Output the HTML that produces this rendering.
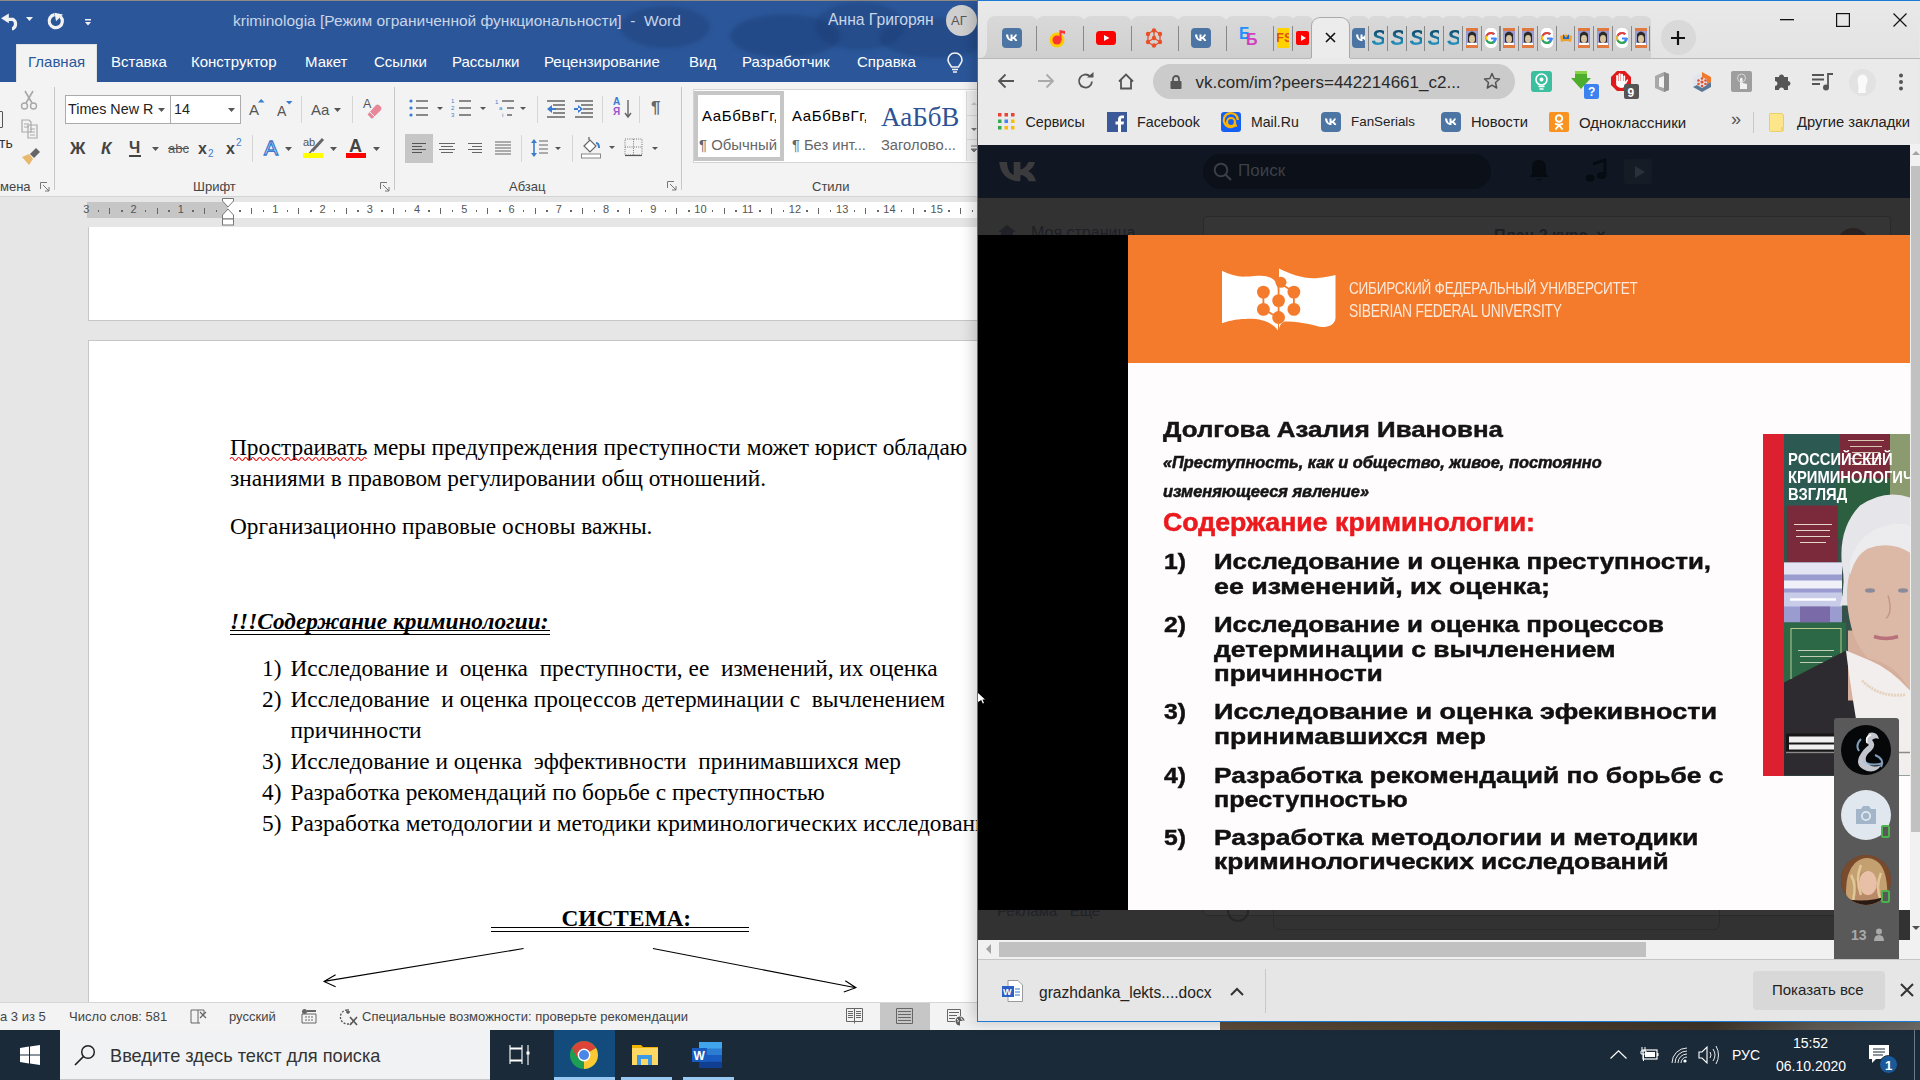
<!DOCTYPE html>
<html><head><meta charset="utf-8">
<style>
*{margin:0;padding:0;box-sizing:border-box}
html,body{width:1920px;height:1080px;overflow:hidden;background:#1b2a38;font-family:"Liberation Sans",sans-serif}
.a{position:absolute}
svg{position:absolute;overflow:visible}
#word{left:0;top:0;width:977px;height:1030px;background:#e6e6e6;overflow:hidden}
#title{left:0;top:0;width:977px;height:44px;background:#2b579a;border-top:1px solid #8e8983}
#tabs{left:0;top:44px;width:977px;height:38px;background:#2b579a}
#tabs2{left:0;top:44px;width:977px;height:38px}
.tab{position:absolute;top:9px;font-size:15px;color:#fff;white-space:nowrap}
#ribbon{left:0;top:82px;width:977px;height:115px;background:#f3f3f3;border-bottom:1px solid #d5d5d5}
.rl{position:absolute;font-size:13px;color:#444;white-space:nowrap}
.sep{position:absolute;width:1px;background:#c8c8c8}
#ruler{left:0;top:197px;width:977px;height:30px;background:#e6e6e6}
#status{left:0;top:1002px;width:977px;height:28px;background:#f3f3f3;border-top:1px solid #d6d6d6}
.st{position:absolute;top:6px;font-size:13px;color:#444;white-space:nowrap}
#taskbar{left:0;top:1030px;width:1920px;height:50px;background:#1b2a38}
#chrome{left:977px;top:0;width:943px;height:1022px;background:#e8e8e8;border:1px solid #1a7ad4;border-right:none;overflow:hidden;box-shadow:-4px 0 13px rgba(0,0,0,0.18)}
.page{background:#fff;border:1px solid #c6c6c6}
.doc{position:absolute;font-family:"Liberation Serif",serif;font-size:23.33px;line-height:31px;color:#000;white-space:nowrap}
.bm{top:113px;color:#222;white-space:nowrap}
.sl{position:absolute;font-family:"Liberation Sans",sans-serif;font-weight:bold;-webkit-text-stroke:0.55px currentColor;line-height:1;white-space:nowrap;transform-origin:0 0}
.rn{position:absolute;top:6px;font-size:11px;color:#555;transform:translateX(-50%)}
</style></head><body>
<div id="word" class="a">
  <div id="title" class="a"></div>
  <div id="tabs" class="a"></div>
  <div class="a" style="left:0;top:0;width:977px;height:82px;overflow:hidden">
    <div class="a" style="left:620px;top:6px;width:90px;height:42px;border-radius:50%;background:rgba(22,50,100,0.3);filter:blur(2px)"></div>
    <div class="a" style="left:730px;top:14px;width:110px;height:44px;border-radius:50%;background:rgba(22,50,100,0.33);filter:blur(2px)"></div>
    <div class="a" style="left:815px;top:2px;width:90px;height:48px;border-radius:50%;background:rgba(22,50,100,0.28);filter:blur(2px)"></div>
    <div class="a" style="left:880px;top:18px;width:110px;height:40px;border-radius:50%;background:rgba(22,50,100,0.3);filter:blur(2px)"></div>
  </div>
  <div class="a" style="left:0;top:0;width:977px;height:44px">
    <!-- undo -->
    <svg width="22" height="18" style="left:1px;top:13px" viewBox="0 0 22 18"><path d="M6 6.4 H12 A5.4 5.4 0 0 1 12 15.6 H11" fill="none" stroke="#f2f2f2" stroke-width="3.2"/><path d="M0 5.3 L7.8 0.5 V10.2 Z" fill="#f2f2f2"/></svg>
    <svg width="8" height="5" style="left:26px;top:17px"><path d="M0 0 L7 0 L3.5 4 Z" fill="#f2f2f2"/></svg>
    <!-- redo -->
    <svg width="22" height="22" style="left:45px;top:12px" viewBox="0 0 22 22"><path d="M9.6 2.6 A6.6 6.6 0 1 0 15.6 4.6" fill="none" stroke="#f2f2f2" stroke-width="3.2"/><path d="M9.6 0.8 L18 2.4 L11 9.2 Z" fill="#f2f2f2"/></svg>
    <svg width="8" height="8" style="left:85px;top:19px"><rect x="0" y="0" width="6" height="1.5" fill="#f2f2f2"/><path d="M0 3 L6 3 L3 6.5 Z" fill="#f2f2f2"/></svg>
    <div class="a" style="left:233px;top:12px;font-size:15.5px;color:#c9d5e8;white-space:nowrap">kriminologia [Режим ограниченной функциональности]&nbsp; -&nbsp; Word</div>
    <div class="a" style="left:828px;top:11px;font-size:15.7px;color:#c9d5e8;white-space:nowrap">Анна Григорян</div>
    <div class="a" style="left:946px;top:5px;width:31px;height:31px;border-radius:50%;background:#cfcfcf;font-size:13px;color:#555;line-height:31px;text-indent:5px;overflow:hidden;white-space:nowrap">АГ</div>
  </div>
  <div id="tabs2" class="a">
    <div class="a" style="left:16px;top:0;width:81px;height:38px;background:#f3f3f3;border:1px solid #e1e1e1;border-bottom:none"></div>
    <div class="tab" style="left:28px;color:#2b579a">Главная</div>
    <div class="tab" style="left:111px">Вставка</div>
    <div class="tab" style="left:191px">Конструктор</div>
    <div class="tab" style="left:305px">Макет</div>
    <div class="tab" style="left:374px">Ссылки</div>
    <div class="tab" style="left:452px">Рассылки</div>
    <div class="tab" style="left:544px">Рецензирование</div>
    <div class="tab" style="left:689px">Вид</div>
    <div class="tab" style="left:742px">Разработчик</div>
    <div class="tab" style="left:857px">Справка</div>
    <svg width="16" height="22" style="left:947px;top:8px" viewBox="0 0 16 22"><path d="M8 1 C3.5 1 1 4.5 1 8 C1 11 3.5 12.5 4.5 15 L11.5 15 C12.5 12.5 15 11 15 8 C15 4.5 12.5 1 8 1 Z" fill="none" stroke="#f2f2f2" stroke-width="1.6"/><path d="M5 17.5 H11 M6 20 H10" stroke="#f2f2f2" stroke-width="1.6"/></svg>
  </div>
  <div id="ribbon" class="a">
    <!-- clipboard -->
    <div class="a" style="left:-4px;top:29px;width:7px;height:17px;border:1.5px solid #555;border-radius:1px"></div>
    <div class="rl" style="left:-1px;top:53px;font-size:14px;color:#333">ть</div>
    <svg width="18" height="20" style="left:20px;top:8px" viewBox="0 0 18 20"><path d="M5 1 L12 13 M13 1 L6 13" stroke="#a8a8a8" stroke-width="1.6"/><circle cx="4.5" cy="16" r="3" fill="none" stroke="#a8a8a8" stroke-width="1.4"/><circle cx="13.5" cy="16" r="3" fill="none" stroke="#a8a8a8" stroke-width="1.4"/></svg>
    <svg width="18" height="20" style="left:21px;top:37px" viewBox="0 0 18 20"><path d="M1 1 H8 L10 3 V13 H1 Z M7 6 H16 V19 H7 Z" fill="#f3f3f3" stroke="#aaa" stroke-width="1.2"/><path d="M3 5H8M3 8H8M9 10H14M9 13H14M9 16H14" stroke="#aaa" stroke-width="1"/></svg>
    <svg width="20" height="18" style="left:21px;top:66px" viewBox="0 0 20 18"><path d="M1 9 L8 6 L12 11 L8 17 Z" fill="#e8b86c"/><path d="M9 6 L15 0 L19 4 L13 10 Z" fill="#666"/></svg>
    <div class="rl" style="left:0px;top:97px">мена</div>
    <svg width="10" height="10" style="left:40px;top:100px" viewBox="0 0 10 10"><path d="M0.5 7 V0.5 H7 M3 3 L9 9 M9 5 V9 H5" fill="none" stroke="#777" stroke-width="1"/></svg>
    <div class="sep" style="left:54px;top:5px;height:103px"></div>
    <!-- font -->
    <div class="a" style="left:65px;top:13px;width:106px;height:29px;background:#fff;border:1px solid #ababab"></div>
    <div class="a" style="left:170px;top:13px;width:71px;height:29px;background:#fff;border:1px solid #ababab"></div>
    <div class="rl" style="left:68px;top:19px;font-size:14.3px;color:#222">Times New R</div>
    <svg width="8" height="5" style="left:158px;top:26px"><path d="M0 0H7L3.5 4Z" fill="#555"/></svg>
    <div class="rl" style="left:174px;top:19px;font-size:14.3px;color:#222">14</div>
    <svg width="8" height="5" style="left:228px;top:26px"><path d="M0 0H7L3.5 4Z" fill="#555"/></svg>
    <div class="rl" style="left:249px;top:19px;font-size:15px;color:#555">A</div>
    <svg width="7" height="4" style="left:258px;top:17px"><path d="M0 3.5H6.5L3.25 0Z" fill="#3b7bd1"/></svg>
    <div class="rl" style="left:277px;top:21px;font-size:14px;color:#555">A</div>
    <svg width="7" height="4" style="left:285.5px;top:19px"><path d="M0 0H6.5L3.25 3.5Z" fill="#3b7bd1"/></svg>
    <div class="sep" style="left:301px;top:14px;height:27px;background:#d6d6d6"></div>
    <div class="rl" style="left:311px;top:19px;font-size:15px;color:#555">Aa</div>
    <svg width="8" height="5" style="left:334px;top:26px"><path d="M0 0H7L3.5 4Z" fill="#555"/></svg>
    <div class="sep" style="left:352px;top:14px;height:27px;background:#d6d6d6"></div>
    <div class="rl" style="left:363px;top:15px;font-size:12.5px;color:#555">A</div>
    <svg width="18" height="16" style="left:365px;top:103px;top:21px" viewBox="0 0 18 16"><path d="M3 11 L11 2 Q12.5 0.8 14 2 L16 4 Q17 5.5 16 7 L8 15 Q7 16 6 15 L3 12 Q2 11.5 3 11Z" fill="#e8869a"/><path d="M5 9 L10 14" stroke="#f3f3f3" stroke-width="1"/></svg>
    <div class="rl" style="left:70px;top:57px;font-size:17px;font-weight:bold;color:#444">Ж</div>
    <div class="rl" style="left:101px;top:57px;font-size:17px;font-weight:bold;font-style:italic;color:#444">К</div>
    <div class="rl" style="left:129px;top:57px;font-size:16px;font-weight:bold;color:#444">Ч</div>
    <div class="a" style="left:129px;top:73px;width:12px;height:1.5px;background:#444"></div>
    <svg width="8" height="5" style="left:152px;top:65px"><path d="M0 0H7L3.5 4Z" fill="#555"/></svg>
    <div class="rl" style="left:168px;top:59px;font-size:13px;color:#555;text-decoration:line-through">abc</div>
    <div class="rl" style="left:198px;top:58px;font-size:16px;font-weight:bold;color:#444">x</div>
    <div class="rl" style="left:208px;top:66px;font-size:10px;color:#3b7bd1">2</div>
    <div class="rl" style="left:226px;top:58px;font-size:16px;font-weight:bold;color:#444">x</div>
    <div class="rl" style="left:236px;top:55px;font-size:10px;color:#3b7bd1">2</div>
    <div class="sep" style="left:252px;top:53px;height:27px;background:#d6d6d6"></div>
    <div class="rl" style="left:264px;top:54px;font-size:21px;color:#f3f3f3;-webkit-text-stroke:1.3px #3b7bd1">A</div>
    <svg width="8" height="5" style="left:285px;top:65px"><path d="M0 0H7L3.5 4Z" fill="#555"/></svg>
    <div class="rl" style="left:303px;top:54px;font-size:11px;color:#555">ab</div>
    <svg width="20" height="18" style="left:306px;top:55px" viewBox="0 0 20 18"><path d="M6 14 L17 2" stroke="#666" stroke-width="3"/><path d="M3 17 L6 13" stroke="#666" stroke-width="1.5"/></svg>
    <div class="a" style="left:303px;top:71px;width:20px;height:5px;background:#ffff00"></div>
    <svg width="8" height="5" style="left:330px;top:65px"><path d="M0 0H7L3.5 4Z" fill="#555"/></svg>
    <div class="rl" style="left:349px;top:54px;font-size:18px;font-weight:bold;color:#444">A</div>
    <div class="a" style="left:346px;top:71px;width:20px;height:5px;background:#ff0000"></div>
    <svg width="8" height="5" style="left:373px;top:65px"><path d="M0 0H7L3.5 4Z" fill="#555"/></svg>
    <div class="rl" style="left:193px;top:97px">Шрифт</div>
    <svg width="10" height="10" style="left:380px;top:100px" viewBox="0 0 10 10"><path d="M0.5 7 V0.5 H7 M3 3 L9 9 M9 5 V9 H5" fill="none" stroke="#777" stroke-width="1"/></svg>
    <div class="sep" style="left:394px;top:5px;height:103px"></div>
    <!-- paragraph -->
    <svg width="140" height="22" style="left:408px;top:15px" viewBox="0 0 140 22">
      <g fill="#3b7bd1"><circle cx="3" cy="4" r="1.6"/><circle cx="3" cy="11" r="1.6"/><circle cx="3" cy="18" r="1.6"/></g>
      <path d="M8 4H20M8 11H20M8 18H20" stroke="#666" stroke-width="1.3"/>
      <path d="M29 10H35L32 13Z" fill="#555"/>
      <g fill="#3b7bd1" font-size="6" font-family="Liberation Sans"><text x="43" y="6">1</text><text x="43" y="13">2</text><text x="43" y="20">3</text></g>
      <path d="M51 4H63M51 11H63M51 18H63" stroke="#666" stroke-width="1.3"/>
      <path d="M72 10H78L75 13Z" fill="#555"/>
      <g fill="#3b7bd1" font-size="6" font-family="Liberation Sans"><text x="87" y="7">1</text><text x="91" y="13">a</text><text x="94" y="20">i</text></g>
      <path d="M94 4H106M99 11H106M99 18H104" stroke="#666" stroke-width="1.3"/>
      <path d="M112 10H118L115 13Z" fill="#555"/>
    </svg>
    <div class="sep" style="left:537px;top:14px;height:27px;background:#d6d6d6"></div>
    <svg width="50" height="20" style="left:546px;top:18px" viewBox="0 0 50 20">
      <path d="M1 1H19M7 5H19M9 9H19M7 13H19M1 17H19" stroke="#666" stroke-width="1.3"/>
      <path d="M1 9 L6 5 V13 Z M4 8H10V10H4Z" fill="#3b7bd1"/>
      <path d="M29 1H47M35 5H47M37 9H47M35 13H47M29 17H47" stroke="#666" stroke-width="1.3"/>
      <path d="M37 9 L32 5 V13 Z M28 8H34V10H28Z" fill="#3b7bd1"/>
    </svg>
    <div class="sep" style="left:602px;top:14px;height:27px;background:#d6d6d6"></div>
    <div class="rl" style="left:613px;top:14px;font-size:10px;font-weight:bold;color:#3b7bd1">A</div>
    <div class="rl" style="left:613px;top:24px;font-size:10px;font-weight:bold;color:#9a55c8">Я</div>
    <svg width="8" height="20" style="left:624px;top:99px;top:17px" viewBox="0 0 8 20"><path d="M4 1V18 M1 14 L4 18 L7 14" fill="none" stroke="#666" stroke-width="1.4"/></svg>
    <div class="sep" style="left:639px;top:14px;height:27px;background:#d6d6d6"></div>
    <div class="rl" style="left:651px;top:16px;font-size:17px;font-weight:bold;color:#666">¶</div>
    <div class="a" style="left:405px;top:52px;width:28px;height:29px;background:#c6c6c6"></div>
    <svg width="110" height="16" style="left:410px;top:60px" viewBox="0 0 110 16">
      <path d="M2 1.5H16M2 4.5H12M2 7.5H16M2 10.5H12" stroke="#555" stroke-width="1.2"/>
      <path d="M29 1.5H45M31 4.5H43M29 7.5H45M31 10.5H43" stroke="#666" stroke-width="1.2"/>
      <path d="M58 1.5H72M62 4.5H72M58 7.5H72M62 10.5H72" stroke="#666" stroke-width="1.2"/>
      <path d="M85 0H101M85 3H101M85 6H101M85 9H101M85 12H101" stroke="#666" stroke-width="1.2"/>
    </svg>
    <div class="sep" style="left:521px;top:53px;height:27px;background:#d6d6d6"></div>
    <svg width="34" height="20" style="left:530px;top:56px" viewBox="0 0 34 20"><path d="M4 2V18" stroke="#3b7bd1" stroke-width="1.6"/><path d="M1 5L4 1L7 5Z M1 15L4 19L7 15Z" fill="#3b7bd1"/><path d="M9 3H18M9 7H18M9 11H18M9 15H18" stroke="#666" stroke-width="1.2"/><path d="M25 9H31L28 12Z" fill="#555"/></svg>
    <div class="sep" style="left:572px;top:53px;height:27px;background:#d6d6d6"></div>
    <svg width="40" height="22" style="left:580px;top:55px" viewBox="0 0 40 22"><path d="M4 9 L10 3 L16 9 L10 15 Z" fill="#fff" stroke="#666" stroke-width="1.2"/><path d="M9 3 V0" stroke="#666" stroke-width="1.3"/><path d="M16 6 Q19 6 19 11" fill="none" stroke="#3b7bd1" stroke-width="2"/><rect x="1.5" y="17" width="19" height="4" fill="#fff" stroke="#888" stroke-width="1"/><path d="M29 9H35L32 12Z" fill="#555"/></svg>
    <svg width="40" height="20" style="left:624px;top:56px" viewBox="0 0 40 20"><path d="M1 1H18V17H1Z M9.5 1V17 M1 9H18" fill="none" stroke="#777" stroke-width="1" stroke-dasharray="1 1.2"/><path d="M1 17.5H18" stroke="#555" stroke-width="1.2"/><path d="M28 9H34L31 12Z" fill="#555"/></svg>
    <div class="rl" style="left:509px;top:97px">Абзац</div>
    <svg width="10" height="10" style="left:667px;top:99px" viewBox="0 0 10 10"><path d="M0.5 7 V0.5 H7 M3 3 L9 9 M9 5 V9 H5" fill="none" stroke="#777" stroke-width="1"/></svg>
    <div class="sep" style="left:681px;top:5px;height:103px"></div>
    <!-- styles -->
    <div class="a" style="left:693px;top:7px;width:290px;height:74px;background:#fff;border:1px solid #d4d4d4"></div>
    <div class="a" style="left:694px;top:9px;width:90px;height:70px;border:4.5px solid #c6c6c6"></div>
    <div class="rl" style="left:702px;top:25px;font-size:15px;color:#000;width:74px;overflow:hidden;letter-spacing:0.6px">АаБбВвГг,</div>
    <div class="rl" style="left:699px;top:55px;font-size:14.9px;color:#666">¶ Обычный</div>
    <div class="rl" style="left:792px;top:25px;font-size:15px;color:#000;width:74px;overflow:hidden;letter-spacing:0.6px">АаБбВвГг,</div>
    <div class="rl" style="left:792px;top:55px;font-size:14.7px;color:#666">¶ Без инт...</div>
    <div class="rl" style="left:881px;top:20px;font-family:'Liberation Serif',serif;font-size:27px;color:#2e5395">АаБбВ</div>
    <div class="rl" style="left:881px;top:55px;font-size:14.7px;color:#666">Заголово...</div>
    <div class="a" style="left:966px;top:9px;width:11px;height:70px;background:#f0f0f0;border-left:1px solid #dcdcdc"></div>
    <div class="a" style="left:967px;top:33px;width:10px;height:1px;background:#d8d8d8"></div><div class="a" style="left:967px;top:57px;width:10px;height:1px;background:#d8d8d8"></div>
    <svg width="10" height="70" style="left:968px;top:9px"><path d="M3 14L6 11L9 14Z" fill="#c8c8c8"/><path d="M3 37L6 40L9 37Z" fill="#777"/><path d="M3 55H9M3 58L6 61L9 58Z" stroke="#777" fill="#777" stroke-width="1"/></svg>
    <div class="rl" style="left:812px;top:97px">Стили</div>
  </div>
  <div id="ruler" class="a">
    <div class="a" style="left:87px;top:5px;width:900px;height:16px;background:#fff"></div>
    <div class="a" style="left:87px;top:5px;width:141px;height:16px;background:#c6c6c6"></div>
<div class="rn" style="left:86.3px">3</div>
<div class="a" style="left:97.6px;top:13px;width:1.5px;height:1.5px;background:#666"></div>
<div class="a" style="left:109.4px;top:11px;width:1px;height:6px;background:#666"></div>
<div class="a" style="left:121.2px;top:13px;width:1.5px;height:1.5px;background:#666"></div>
<div class="rn" style="left:133.5px">2</div>
<div class="a" style="left:144.8px;top:13px;width:1.5px;height:1.5px;background:#666"></div>
<div class="a" style="left:156.6px;top:11px;width:1px;height:6px;background:#666"></div>
<div class="a" style="left:168.4px;top:13px;width:1.5px;height:1.5px;background:#666"></div>
<div class="rn" style="left:180.8px">1</div>
<div class="a" style="left:192.1px;top:13px;width:1.5px;height:1.5px;background:#666"></div>
<div class="a" style="left:203.9px;top:11px;width:1px;height:6px;background:#666"></div>
<div class="a" style="left:215.7px;top:13px;width:1.5px;height:1.5px;background:#666"></div>
<div class="a" style="left:239.3px;top:13px;width:1.5px;height:1.5px;background:#666"></div>
<div class="a" style="left:251.1px;top:11px;width:1px;height:6px;background:#666"></div>
<div class="a" style="left:262.9px;top:13px;width:1.5px;height:1.5px;background:#666"></div>
<div class="rn" style="left:275.2px">1</div>
<div class="a" style="left:286.6px;top:13px;width:1.5px;height:1.5px;background:#666"></div>
<div class="a" style="left:298.4px;top:11px;width:1px;height:6px;background:#666"></div>
<div class="a" style="left:310.2px;top:13px;width:1.5px;height:1.5px;background:#666"></div>
<div class="rn" style="left:322.5px">2</div>
<div class="a" style="left:333.8px;top:13px;width:1.5px;height:1.5px;background:#666"></div>
<div class="a" style="left:345.6px;top:11px;width:1px;height:6px;background:#666"></div>
<div class="a" style="left:357.4px;top:13px;width:1.5px;height:1.5px;background:#666"></div>
<div class="rn" style="left:369.7px">3</div>
<div class="a" style="left:381.0px;top:13px;width:1.5px;height:1.5px;background:#666"></div>
<div class="a" style="left:392.9px;top:11px;width:1px;height:6px;background:#666"></div>
<div class="a" style="left:404.7px;top:13px;width:1.5px;height:1.5px;background:#666"></div>
<div class="rn" style="left:417.0px">4</div>
<div class="a" style="left:428.3px;top:13px;width:1.5px;height:1.5px;background:#666"></div>
<div class="a" style="left:440.1px;top:11px;width:1px;height:6px;background:#666"></div>
<div class="a" style="left:451.9px;top:13px;width:1.5px;height:1.5px;background:#666"></div>
<div class="rn" style="left:464.2px">5</div>
<div class="a" style="left:475.5px;top:13px;width:1.5px;height:1.5px;background:#666"></div>
<div class="a" style="left:487.3px;top:11px;width:1px;height:6px;background:#666"></div>
<div class="a" style="left:499.2px;top:13px;width:1.5px;height:1.5px;background:#666"></div>
<div class="rn" style="left:511.5px">6</div>
<div class="a" style="left:522.8px;top:13px;width:1.5px;height:1.5px;background:#666"></div>
<div class="a" style="left:534.6px;top:11px;width:1px;height:6px;background:#666"></div>
<div class="a" style="left:546.4px;top:13px;width:1.5px;height:1.5px;background:#666"></div>
<div class="rn" style="left:558.7px">7</div>
<div class="a" style="left:570.0px;top:13px;width:1.5px;height:1.5px;background:#666"></div>
<div class="a" style="left:581.8px;top:11px;width:1px;height:6px;background:#666"></div>
<div class="a" style="left:593.6px;top:13px;width:1.5px;height:1.5px;background:#666"></div>
<div class="rn" style="left:606.0px">8</div>
<div class="a" style="left:617.3px;top:13px;width:1.5px;height:1.5px;background:#666"></div>
<div class="a" style="left:629.1px;top:11px;width:1px;height:6px;background:#666"></div>
<div class="a" style="left:640.9px;top:13px;width:1.5px;height:1.5px;background:#666"></div>
<div class="rn" style="left:653.2px">9</div>
<div class="a" style="left:664.5px;top:13px;width:1.5px;height:1.5px;background:#666"></div>
<div class="a" style="left:676.3px;top:11px;width:1px;height:6px;background:#666"></div>
<div class="a" style="left:688.1px;top:13px;width:1.5px;height:1.5px;background:#666"></div>
<div class="rn" style="left:700.4px">10</div>
<div class="a" style="left:711.8px;top:13px;width:1.5px;height:1.5px;background:#666"></div>
<div class="a" style="left:723.6px;top:11px;width:1px;height:6px;background:#666"></div>
<div class="a" style="left:735.4px;top:13px;width:1.5px;height:1.5px;background:#666"></div>
<div class="rn" style="left:747.7px">11</div>
<div class="a" style="left:759.0px;top:13px;width:1.5px;height:1.5px;background:#666"></div>
<div class="a" style="left:770.8px;top:11px;width:1px;height:6px;background:#666"></div>
<div class="a" style="left:782.6px;top:13px;width:1.5px;height:1.5px;background:#666"></div>
<div class="rn" style="left:794.9px">12</div>
<div class="a" style="left:806.2px;top:13px;width:1.5px;height:1.5px;background:#666"></div>
<div class="a" style="left:818.0px;top:11px;width:1px;height:6px;background:#666"></div>
<div class="a" style="left:829.9px;top:13px;width:1.5px;height:1.5px;background:#666"></div>
<div class="rn" style="left:842.2px">13</div>
<div class="a" style="left:853.5px;top:13px;width:1.5px;height:1.5px;background:#666"></div>
<div class="a" style="left:865.3px;top:11px;width:1px;height:6px;background:#666"></div>
<div class="a" style="left:877.1px;top:13px;width:1.5px;height:1.5px;background:#666"></div>
<div class="rn" style="left:889.4px">14</div>
<div class="a" style="left:900.7px;top:13px;width:1.5px;height:1.5px;background:#666"></div>
<div class="a" style="left:912.5px;top:11px;width:1px;height:6px;background:#666"></div>
<div class="a" style="left:924.3px;top:13px;width:1.5px;height:1.5px;background:#666"></div>
<div class="rn" style="left:936.7px">15</div>
<div class="a" style="left:948.0px;top:13px;width:1.5px;height:1.5px;background:#666"></div>
<div class="a" style="left:959.8px;top:11px;width:1px;height:6px;background:#666"></div>
<div class="a" style="left:971.6px;top:13px;width:1.5px;height:1.5px;background:#666"></div>
<div class="rn" style="left:983.9px">16</div>
<svg width="12" height="30" style="left:222px;top:0px" viewBox="0 0 12 30"><path d="M0.5 1.5 H11.5 V4 L6 10 L0.5 4 Z" fill="#fff" stroke="#777" stroke-width="1"/><path d="M6 12 L11.5 18 V22 H0.5 V18 Z" fill="#fff" stroke="#777" stroke-width="1"/><rect x="0.5" y="22" width="11" height="6" fill="#fff" stroke="#777" stroke-width="1"/></svg>
  </div>
  <div class="a page" style="left:88px;top:227px;width:1000px;height:94px;border-top:none"></div>
  <div class="a page" style="left:88px;top:340px;width:1000px;height:700px"></div>
  <div class="doc" style="left:230px;top:432px">Простраивать меры предупреждения преступности может юрист обладаю</div>
  <svg width="140" height="6" style="left:230px;top:456px" viewBox="0 0 140 6"><path d="M0 3 Q1.75 0 3.5 3 T7 3 T10.5 3 T14 3 T17.5 3 T21 3 T24.5 3 T28 3 T31.5 3 T35 3 T38.5 3 T42 3 T45.5 3 T49 3 T52.5 3 T56 3 T59.5 3 T63 3 T66.5 3 T70 3 T73.5 3 T77 3 T80.5 3 T84 3 T87.5 3 T91 3 T94.5 3 T98 3 T101.5 3 T105 3 T108.5 3 T112 3 T115.5 3 T119 3 T122.5 3 T126 3 T129.5 3 T133 3 T136.5 3" fill="none" stroke="#e81010" stroke-width="1.2"/></svg>
  <div class="doc" style="left:230px;top:463px">знаниями в правовом регулировании общ отношений.</div>
  <div class="doc" style="left:230px;top:510.5px">Организационно правовые основы важны.</div>
  <div class="doc" style="left:230px;top:606px;font-weight:bold;font-style:italic">!!!Содержание криминологии:</div>
  <div class="a" style="left:230px;top:630px;width:320px;height:5px;border-top:1.3px solid #000;border-bottom:1.3px solid #000"></div>
  <div class="doc" style="left:262px;top:653px">1)</div><div class="doc" style="left:290.5px;top:653px">Исследование и&nbsp; оценка&nbsp; преступности, ее&nbsp; изменений, их оценка</div>
  <div class="doc" style="left:262px;top:684px">2)</div><div class="doc" style="left:290.5px;top:684px">Исследование&nbsp; и оценка процессов детерминации с&nbsp; вычленением</div>
  <div class="doc" style="left:290.5px;top:715px">причинности</div>
  <div class="doc" style="left:262px;top:746px">3)</div><div class="doc" style="left:290.5px;top:746px">Исследование и оценка&nbsp; эффективности&nbsp; принимавшихся мер</div>
  <div class="doc" style="left:262px;top:777px">4)</div><div class="doc" style="left:290.5px;top:777px">Разработка рекомендаций по борьбе с преступностью</div>
  <div class="doc" style="left:262px;top:808px">5)</div><div class="doc" style="left:290.5px;top:808px">Разработка методологии и методики криминологических исследований</div>
  <div class="doc" style="left:561.5px;top:902.5px;font-weight:bold">СИСТЕМА:</div>
  <div class="a" style="left:490.5px;top:926.5px;width:258.5px;height:5px;border-top:1.3px solid #000;border-bottom:1.3px solid #000"></div>
  <svg width="977" height="1002" style="left:0;top:0" viewBox="0 0 977 1002"><g fill="none" stroke="#000" stroke-width="1.1"><path d="M523.6 948.5 L324 981.4 M335.6 974.7 L324 981.4 L335.6 986.8"/><path d="M652.9 948.5 L855.9 987.7 M845.3 980.8 L855.9 987.7 L843.8 992"/></g></svg>
  <div id="status" class="a">
    <div class="st" style="left:0px">а 3 из 5</div>
    <div class="st" style="left:69px">Число слов: 581</div>
    <svg width="18" height="16" style="left:190px;top:6px" viewBox="0 0 18 16"><path d="M1 1H8V14H1Z M8 1H14V5 M8 14H10" fill="none" stroke="#666" stroke-width="1"/><path d="M10 3L16 9M16 3L10 9" stroke="#666" stroke-width="1.3"/></svg>
    <div class="st" style="left:229px">русский</div>
    <svg width="16" height="16" style="left:301px;top:5px" viewBox="0 0 16 16"><circle cx="3.5" cy="3.5" r="2.5" fill="#666"/><path d="M1 6H15V15H1Z" fill="none" stroke="#666" stroke-width="1"/><path d="M4 9H6M7 9H9M10 9H12M4 12H6M7 12H9M10 12H12" stroke="#666" stroke-width="1"/><path d="M6 3H15" stroke="#666" stroke-width="2"/></svg>
    <svg width="20" height="18" style="left:339px;top:5px" viewBox="0 0 20 18"><path d="M8 2 A7 7 0 1 0 12 15" fill="none" stroke="#555" stroke-width="1.3" stroke-dasharray="2 1.5"/><path d="M9 1V6M7 4H11" stroke="#555" stroke-width="1.3"/><path d="M11 9L18 17M18 9L11 17" stroke="#555" stroke-width="1.6"/></svg>
    <div class="st" style="left:362px">Специальные возможности: проверьте рекомендации</div>
    <svg width="20" height="18" style="left:845px;top:4px" viewBox="0 0 20 18"><path d="M1.5 1.5H17.5V14.5H1.5Z M9.5 1.5V16.5" fill="none" stroke="#666" stroke-width="1"/><path d="M3 4.5H8M3 6.5H8M3 8.5H8M3 10.5H8M11 4.5H16M11 6.5H16M11 8.5H16M11 10.5H16" stroke="#666" stroke-width="1"/></svg>
    <div class="a" style="left:880px;top:0px;width:50px;height:27px;background:#c6c6c6"></div>
    <svg width="18" height="18" style="left:895px;top:4px" viewBox="0 0 18 18"><path d="M1.5 1.5H17.5V16.5H1.5Z" fill="none" stroke="#666" stroke-width="1"/><path d="M3 4.5H16M3 7.5H16M3 10.5H16M3 13.5H16" stroke="#666" stroke-width="1"/></svg>
    <svg width="20" height="18" style="left:946px;top:5px" viewBox="0 0 20 18"><path d="M1.5 1.5H14.5V8 M1.5 1.5V13.5H9" fill="none" stroke="#666" stroke-width="1"/><path d="M3 4.5H13M3 7.5H11M3 10.5H9" stroke="#666" stroke-width="1"/><circle cx="14" cy="13" r="4.5" fill="#5e5e5e"/><path d="M11 11 Q13 12 12 14 M15 9.5 Q15 12 17.5 12.5 M14 16 Q15 14.5 17 15" stroke="#f3f3f3" stroke-width="1" fill="none"/></svg>
  </div>
</div>
<div id="taskbar" class="a">
  <svg width="21" height="21" style="left:20px;top:15px" viewBox="0 0 21 21"><path d="M0 3 L9 1.6 V9.5 H0 Z M10 1.4 L20 0 V9.5 H10 Z M0 10.5 H9 V18.4 L0 17 Z M10 10.5 H20 V20 L10 18.6 Z" fill="#fff"/></svg>
  <div class="a" style="left:60px;top:0;width:430px;height:50px;background:#f1f2f4;border-bottom:1px solid #c8c8c8"></div>
  <svg width="22" height="22" style="left:74px;top:14px" viewBox="0 0 22 22"><circle cx="14" cy="8" r="6.3" fill="none" stroke="#222" stroke-width="1.5"/><path d="M9.5 12.5 L1 21" stroke="#222" stroke-width="1.7"/></svg>
  <div class="a" style="left:110px;top:15.5px;font-size:18.2px;color:#333;white-space:nowrap">Введите здесь текст для поиска</div>
  <svg width="22" height="20" style="left:509px;top:15px" viewBox="0 0 22 20"><path d="M1 0V3H13V0 M1 19V16H13V19 M1 4H13V15H1Z" fill="none" stroke="#fff" stroke-width="1.1"/><path d="M19 0V20" stroke="#fff" stroke-width="1.1"/><rect x="17.5" y="6.5" width="3" height="3" fill="#fff"/></svg>
  <div class="a" style="left:554px;top:0;width:61px;height:47px;background:#124b7c"></div>
  <div class="a" style="left:554px;top:47px;width:61px;height:3px;background:#99c9f0"></div>
  <div class="a" style="left:621px;top:47px;width:51px;height:3px;background:#99c9f0"></div>
  <div class="a" style="left:683px;top:47px;width:51px;height:3px;background:#99c9f0"></div>
  <svg width="30" height="30" style="left:569px;top:10px" viewBox="0 0 30 30"><circle cx="15" cy="15" r="14" fill="#1e9e52"/><path d="M15 15 L27.1 8 A14 14 0 0 0 2.9 8 Z" fill="#db4437"/><path d="M15 15 L27.1 8 A14 14 0 0 1 15 29 Z" fill="#fcc934"/><path d="M15 15 L2.9 8 L8 17 Z" fill="#db4437"/><circle cx="15" cy="15" r="6.4" fill="#fff"/><circle cx="15" cy="15" r="5" fill="#4a86e8"/></svg>
  <svg width="28" height="24" style="left:632px;top:13px" viewBox="0 0 28 24"><path d="M0 2 H9 L11 4 H26 V22 H0 Z" fill="#f0b400"/><path d="M0 5 H26 V22 H0 Z" fill="#ffd864"/><path d="M5 22 V12 H20 V22 H16 V16 H9 V22 Z" fill="#3d9ae8"/></svg>
  <svg width="32" height="26" style="left:692px;top:12px" viewBox="0 0 32 26"><rect x="7" y="0" width="23" height="26" fill="#2b7cd3"/><rect x="7" y="0" width="23" height="6.5" fill="#41a5ee"/><rect x="7" y="13" width="23" height="6.5" fill="#185abd"/><rect x="7" y="19.5" width="23" height="6.5" fill="#103f91"/><rect x="0" y="6" width="15" height="14" fill="#185abd"/><text x="1.5" y="17.5" font-family="Liberation Sans" font-weight="bold" font-size="12" fill="#fff">W</text></svg>
  <svg width="17" height="9" style="left:1610px;top:20px" viewBox="0 0 17 9"><path d="M0.5 8.5 L8.5 0.8 L16.5 8.5" fill="none" stroke="#fff" stroke-width="1.2"/></svg>
  <svg width="21" height="15" style="left:1638px;top:17px" viewBox="0 0 21 15"><path d="M4 0V4M7 0V4M3 4H8V7H3Z M5.5 7V14" stroke="#fff" fill="none" stroke-width="1"/><rect x="5" y="3" width="14" height="9" fill="none" stroke="#fff" stroke-width="1.2"/><rect x="7" y="5" width="10" height="5" fill="#fff"/><rect x="19" y="6" width="1.5" height="3" fill="#fff"/></svg>
  <svg width="18" height="17" style="left:1671px;top:17px" viewBox="0 0 18 17"><path d="M1 16 A15 15 0 0 1 16 1 M4 16 A12 12 0 0 1 16 4 M7 16 A9 9 0 0 1 16 7 M10 16 A6 6 0 0 1 16 10" fill="none" stroke="#fff" stroke-width="0.9"/><circle cx="14" cy="14" r="1.6" fill="#fff"/></svg>
  <svg width="22" height="20" style="left:1698px;top:15px" viewBox="0 0 22 20"><path d="M1 7H4L9 2V18L4 13H1Z" fill="none" stroke="#fff" stroke-width="1.1"/><path d="M12 7 Q14 10 12 13 M15 4 Q19 10 15 16 M18 1 Q23 10 18 19" fill="none" stroke="#fff" stroke-width="0.9"/></svg>
  <div class="a" style="left:1732px;top:17px;font-size:14px;color:#fff">РУС</div>
  <div class="a" style="left:1793px;top:5px;font-size:14px;color:#fff">15:52</div>
  <div class="a" style="left:1776px;top:28px;font-size:14px;color:#fff">06.10.2020</div>
  <svg width="30" height="30" style="left:1868px;top:14px" viewBox="0 0 30 30"><path d="M1 1H21V15H8L4 19V15H1Z" fill="#fff"/><path d="M5 5H17M5 8H17M5 11H15" stroke="#1b2a38" stroke-width="1.2"/><circle cx="20.5" cy="20.5" r="9" fill="#1a5a9a" stroke="#1b2a38" stroke-width="1"/><text x="17" y="25.5" font-family="Liberation Sans" font-weight="bold" font-size="13" fill="#fff">1</text></svg>
  <div class="a" style="left:1914px;top:0;width:1px;height:50px;background:#6a7a88"></div>
</div>
<div class="a" style="left:960px;top:1021px;width:260px;height:9px;background:#f0f0f0"></div>
<div class="a" style="left:1220px;top:1021px;width:700px;height:9px;background:linear-gradient(90deg,#5a4a38 0%,#4a3c2c 40%,#3e3428 70%,#5e5a54 85%,#6a6966 100%)"></div>
<div id="chrome" class="a">
  <!-- tab strip -->
  <div class="a" style="left:0;top:0;width:941px;height:57px;background:linear-gradient(#e9e9e9,#e3e3e3)"></div>
  <svg width="9" height="10" style="left:1px;top:46.5px" viewBox="0 0 9 10"><path d="M0 10 Q8 10 8 0 V10 Z" fill="#cfcfcf"/></svg>
  <div class="a" style="left:9.0px;top:14.8px;width:50.7px;height:42px;background:linear-gradient(#d9d9d9,#cfcfcf);border-radius:8px 8px 0 0"></div>
  <div class="a" style="left:57.7px;top:14.8px;width:49.0px;height:42px;background:linear-gradient(#d9d9d9,#cfcfcf);border-radius:8px 8px 0 0"></div>
  <div class="a" style="left:104.7px;top:14.8px;width:49.8px;height:42px;background:linear-gradient(#d9d9d9,#cfcfcf);border-radius:8px 8px 0 0"></div>
  <div class="a" style="left:152.5px;top:14.8px;width:48.9px;height:42px;background:linear-gradient(#d9d9d9,#cfcfcf);border-radius:8px 8px 0 0"></div>
  <div class="a" style="left:199.4px;top:14.8px;width:49.6px;height:42px;background:linear-gradient(#d9d9d9,#cfcfcf);border-radius:8px 8px 0 0"></div>
  <div class="a" style="left:247.0px;top:14.8px;width:49.5px;height:42px;background:linear-gradient(#d9d9d9,#cfcfcf);border-radius:8px 8px 0 0"></div>
  <div class="a" style="left:294.5px;top:14.8px;width:21.0px;height:42px;background:linear-gradient(#d9d9d9,#cfcfcf);border-radius:6px 6px 0 0"></div>
  <div class="a" style="left:313.5px;top:14.8px;width:21.0px;height:42px;background:linear-gradient(#d9d9d9,#cfcfcf);border-radius:6px 6px 0 0"></div>
  <div class="a" style="left:370.4px;top:14.8px;width:21.1px;height:42px;background:linear-gradient(#d9d9d9,#cfcfcf);border-radius:6px 6px 0 0"></div>
  <div class="a" style="left:389.5px;top:14.8px;width:21.0px;height:42px;background:linear-gradient(#d9d9d9,#cfcfcf);border-radius:6px 6px 0 0"></div>
  <div class="a" style="left:408.5px;top:14.8px;width:21.0px;height:42px;background:linear-gradient(#d9d9d9,#cfcfcf);border-radius:6px 6px 0 0"></div>
  <div class="a" style="left:427.5px;top:14.8px;width:19.9px;height:42px;background:linear-gradient(#d9d9d9,#cfcfcf);border-radius:6px 6px 0 0"></div>
  <div class="a" style="left:445.4px;top:14.8px;width:20.8px;height:42px;background:linear-gradient(#d9d9d9,#cfcfcf);border-radius:6px 6px 0 0"></div>
  <div class="a" style="left:464.2px;top:14.8px;width:21.4px;height:42px;background:linear-gradient(#d9d9d9,#cfcfcf);border-radius:6px 6px 0 0"></div>
  <div class="a" style="left:483.6px;top:14.8px;width:21.0px;height:42px;background:linear-gradient(#d9d9d9,#cfcfcf);border-radius:6px 6px 0 0"></div>
  <div class="a" style="left:502.6px;top:14.8px;width:20.2px;height:42px;background:linear-gradient(#d9d9d9,#cfcfcf);border-radius:6px 6px 0 0"></div>
  <div class="a" style="left:520.8px;top:14.8px;width:21.0px;height:42px;background:linear-gradient(#d9d9d9,#cfcfcf);border-radius:6px 6px 0 0"></div>
  <div class="a" style="left:539.8px;top:14.8px;width:20.7px;height:42px;background:linear-gradient(#d9d9d9,#cfcfcf);border-radius:6px 6px 0 0"></div>
  <div class="a" style="left:558.4px;top:14.8px;width:21.3px;height:42px;background:linear-gradient(#d9d9d9,#cfcfcf);border-radius:6px 6px 0 0"></div>
  <div class="a" style="left:577.7px;top:14.8px;width:19.8px;height:42px;background:linear-gradient(#d9d9d9,#cfcfcf);border-radius:6px 6px 0 0"></div>
  <div class="a" style="left:595.5px;top:14.8px;width:21.1px;height:42px;background:linear-gradient(#d9d9d9,#cfcfcf);border-radius:6px 6px 0 0"></div>
  <div class="a" style="left:614.6px;top:14.8px;width:20.9px;height:42px;background:linear-gradient(#d9d9d9,#cfcfcf);border-radius:6px 6px 0 0"></div>
  <div class="a" style="left:633.5px;top:14.8px;width:20.8px;height:42px;background:linear-gradient(#d9d9d9,#cfcfcf);border-radius:6px 6px 0 0"></div>
  <div class="a" style="left:652.3px;top:14.8px;width:20.7px;height:42px;background:linear-gradient(#d9d9d9,#cfcfcf);border-radius:6px 6px 0 0"></div>

<div class="a" style="left:333px;top:16px;width:39px;height:43px;background:#ececec;border:1px solid #a9a9a9;border-bottom:none;border-radius:9px 9px 0 0"></div>
<div class="a" style="left:58.2px;top:25px;width:1.3px;height:25px;background:#888"></div>
<div class="a" style="left:105.2px;top:25px;width:1.3px;height:25px;background:#888"></div>
<div class="a" style="left:153px;top:25px;width:1.3px;height:25px;background:#888"></div>
<div class="a" style="left:199.9px;top:25px;width:1.3px;height:25px;background:#888"></div>
<div class="a" style="left:247.5px;top:25px;width:1.3px;height:25px;background:#888"></div>
<div class="a" style="left:295px;top:25px;width:1.3px;height:25px;background:#888"></div>
<div class="a" style="left:314px;top:25px;width:1.3px;height:25px;background:#888"></div>
<div class="a" style="left:390px;top:25px;width:1.3px;height:25px;background:#888"></div>
<div class="a" style="left:409px;top:25px;width:1.3px;height:25px;background:#888"></div>
<div class="a" style="left:428px;top:25px;width:1.3px;height:25px;background:#888"></div>
<div class="a" style="left:445.9px;top:25px;width:1.3px;height:25px;background:#888"></div>
<div class="a" style="left:464.7px;top:25px;width:1.3px;height:25px;background:#888"></div>
<div class="a" style="left:484.1px;top:25px;width:1.3px;height:25px;background:#888"></div>
<div class="a" style="left:503.1px;top:25px;width:1.3px;height:25px;background:#888"></div>
<div class="a" style="left:521.3px;top:25px;width:1.3px;height:25px;background:#888"></div>
<div class="a" style="left:540.2px;top:25px;width:1.3px;height:25px;background:#888"></div>
<div class="a" style="left:558.9px;top:25px;width:1.3px;height:25px;background:#888"></div>
<div class="a" style="left:578.2px;top:25px;width:1.3px;height:25px;background:#888"></div>
<div class="a" style="left:596px;top:25px;width:1.3px;height:25px;background:#888"></div>
<div class="a" style="left:615.1px;top:25px;width:1.3px;height:25px;background:#888"></div>
<div class="a" style="left:634px;top:25px;width:1.3px;height:25px;background:#888"></div>
<div class="a" style="left:652.8px;top:25px;width:1.3px;height:25px;background:#888"></div>
<div class="a" style="left:671.2px;top:25px;width:1.3px;height:25px;background:#888"></div>
  <svg width="20" height="20" style="left:24px;top:27px" viewBox="0 0 20 20"><rect width="20" height="20" rx="4" fill="#4c75a3"/><path d="M4 6.5H6.2C6.3 9.5 7.6 10.8 8.5 11V6.5H10.5V9C11.6 8.9 12.6 7.7 13 6.5H15C14.7 8 13.6 9.2 12.8 9.7C13.6 10.1 14.8 11.1 15.3 13H13.1C12.7 11.8 11.7 10.9 10.5 10.8V13H10.2C6.6 13 4.2 10.5 4 6.5Z" fill="#fff"/></svg>
<svg width="20" height="20" style="left:71px;top:27px" viewBox="0 0 20 20"><circle cx="8" cy="12" r="7.5" fill="#ffcc00"/><circle cx="8" cy="12" r="4.5" fill="#f33"/><path d="M10.5 12V2L16 3V6L12.5 5V12" fill="#f33"/></svg>
<svg width="20" height="16" style="left:118px;top:29px" viewBox="0 0 20 14"><rect width="20" height="14" rx="3.5" fill="#ff0000"/><path d="M8 4L13.5 7L8 10Z" fill="#fff"/></svg>
<svg width="20" height="20" style="left:166px;top:27px" viewBox="0 0 20 20"><g stroke="#e8502a" stroke-width="1.3" fill="none"><path d="M10 2L16 6V14L10 18L4 14V6Z M10 2V10L16 14 M10 10L4 14"/></g><g fill="#e8502a"><circle cx="10" cy="2.5" r="2.2"/><circle cx="16" cy="6" r="2.2"/><circle cx="16" cy="14" r="2.2"/><circle cx="10" cy="17.5" r="2.2"/><circle cx="4" cy="14" r="2.2"/><circle cx="4" cy="6" r="2.2"/><circle cx="10" cy="10" r="2.2"/></g></svg>
<svg width="20" height="20" style="left:213px;top:27px" viewBox="0 0 20 20"><rect width="20" height="20" rx="4" fill="#4c75a3"/><path d="M4 6.5H6.2C6.3 9.5 7.6 10.8 8.5 11V6.5H10.5V9C11.6 8.9 12.6 7.7 13 6.5H15C14.7 8 13.6 9.2 12.8 9.7C13.6 10.1 14.8 11.1 15.3 13H13.1C12.7 11.8 11.7 10.9 10.5 10.8V13H10.2C6.6 13 4.2 10.5 4 6.5Z" fill="#fff"/></svg>
<div class="a" style="left:261px;top:24px;font-size:16px;font-weight:bold;color:#1e90ff">Б</div><div class="a" style="left:268px;top:30px;font-size:16px;font-weight:bold;color:#d040c0">Б</div>
<div class="a" style="left:299px;top:27px;width:12px;height:20px;background:#ffd200;overflow:hidden"><div style="font-size:13px;color:#e05010;font-weight:bold;line-height:20px;margin-left:-1px">FS</div></div>
<svg width="13" height="14" style="left:318px;top:30px" viewBox="0 0 13 14"><rect width="13" height="14" rx="2" fill="#ff0000"/><path d="M5 4L10 7L5 10Z" fill="#fff"/></svg>
<svg width="11" height="11" style="left:347px;top:31px" viewBox="0 0 11 11"><path d="M1 1L10 10M10 1L1 10" stroke="#111" stroke-width="1.6"/></svg>
<div class="a" style="left:374px;top:27px;width:13px;height:20px;overflow:hidden"><svg width="20" height="20" style="left:0;top:0" viewBox="0 0 20 20"><rect width="20" height="20" rx="4" fill="#4c75a3"/><path d="M4 6.5H6.2C6.3 9.5 7.6 10.8 8.5 11V6.5H10.5V9C11.6 8.9 12.6 7.7 13 6.5H15C14.7 8 13.6 9.2 12.8 9.7C13.6 10.1 14.8 11.1 15.3 13H13.1C12.7 11.8 11.7 10.9 10.5 10.8V13H10.2C6.6 13 4.2 10.5 4 6.5Z" fill="#fff"/></svg></div>
<div class="a" style="left:393.5px;top:26px;font-size:22px;font-weight:bold;font-style:italic;color:#1a7fa8;width:12px;overflow:hidden;line-height:22px;background:linear-gradient(#0a3c5a,#2aa8d8);-webkit-background-clip:text;-webkit-text-fill-color:transparent">S</div>
<div class="a" style="left:412.5px;top:26px;font-size:22px;font-weight:bold;font-style:italic;color:#1a7fa8;width:12px;overflow:hidden;line-height:22px;background:linear-gradient(#0a3c5a,#2aa8d8);-webkit-background-clip:text;-webkit-text-fill-color:transparent">S</div>
<div class="a" style="left:431.5px;top:26px;font-size:22px;font-weight:bold;font-style:italic;color:#1a7fa8;width:12px;overflow:hidden;line-height:22px;background:linear-gradient(#0a3c5a,#2aa8d8);-webkit-background-clip:text;-webkit-text-fill-color:transparent">S</div>
<div class="a" style="left:449.4px;top:26px;font-size:22px;font-weight:bold;font-style:italic;color:#1a7fa8;width:12px;overflow:hidden;line-height:22px;background:linear-gradient(#0a3c5a,#2aa8d8);-webkit-background-clip:text;-webkit-text-fill-color:transparent">S</div>
<div class="a" style="left:469px;top:26px;font-size:22px;font-weight:bold;font-style:italic;width:12px;overflow:hidden;line-height:22px;background:linear-gradient(#0a3c5a,#2aa8d8);-webkit-background-clip:text;-webkit-text-fill-color:transparent">S</div>
<svg width="12" height="20" style="left:488.1px;top:27px" viewBox="0 0 12 20"><rect width="12" height="20" rx="2" fill="#9a9ad0"/><rect x="0" y="0" width="12" height="3" fill="#e07a40"/><path d="M2 6 Q6 1 10 6 L10 14 Q6 16 2 14Z" fill="#2a2a2a"/><ellipse cx="6" cy="11" rx="3" ry="4" fill="#d9c4a0"/><rect x="1" y="15" width="10" height="4" fill="#fff"/><rect x="0" y="17" width="12" height="3" fill="#e07a40"/></svg>
<svg width="12" height="20" style="left:507.1px;top:27px" viewBox="0 0 12 20"><rect width="12" height="20" rx="5" fill="#fff"/><path d="M10.5 9.5H6V11.5H8.6C8.3 13 7.2 14 6 14 A4 4 0 0 1 6 6 C7 6 7.8 6.4 8.5 7L10 5.5 C9 4.5 7.6 4 6 4 A6 6 0 1 0 12 10 Z" fill="#4285f4"/><path d="M0.7 7.2 A6 6 0 0 1 10 5.5 L8.5 7 A4 4 0 0 0 2.4 8.2Z" fill="#ea4335"/><path d="M0.7 12.8 A6 6 0 0 1 0.7 7.2 L2.4 8.2 A4 4 0 0 0 2.4 11.8Z" fill="#fbbc05"/><path d="M10 14.5 A6 6 0 0 1 0.7 12.8 L2.4 11.8 A4 4 0 0 0 8.6 12.8Z" fill="#34a853"/></svg>
<svg width="12" height="20" style="left:525.3px;top:27px" viewBox="0 0 12 20"><rect width="12" height="20" rx="2" fill="#9a9ad0"/><rect x="0" y="0" width="12" height="3" fill="#e07a40"/><path d="M2 6 Q6 1 10 6 L10 14 Q6 16 2 14Z" fill="#2a2a2a"/><ellipse cx="6" cy="11" rx="3" ry="4" fill="#d9c4a0"/><rect x="1" y="15" width="10" height="4" fill="#fff"/><rect x="0" y="17" width="12" height="3" fill="#e07a40"/></svg>
<svg width="12" height="20" style="left:544.2px;top:27px" viewBox="0 0 12 20"><rect width="12" height="20" rx="2" fill="#9a9ad0"/><rect x="0" y="0" width="12" height="3" fill="#e07a40"/><path d="M2 6 Q6 1 10 6 L10 14 Q6 16 2 14Z" fill="#2a2a2a"/><ellipse cx="6" cy="11" rx="3" ry="4" fill="#d9c4a0"/><rect x="1" y="15" width="10" height="4" fill="#fff"/><rect x="0" y="17" width="12" height="3" fill="#e07a40"/></svg>
<svg width="12" height="20" style="left:562.9px;top:27px" viewBox="0 0 12 20"><rect width="12" height="20" rx="5" fill="#fff"/><path d="M10.5 9.5H6V11.5H8.6C8.3 13 7.2 14 6 14 A4 4 0 0 1 6 6 C7 6 7.8 6.4 8.5 7L10 5.5 C9 4.5 7.6 4 6 4 A6 6 0 1 0 12 10 Z" fill="#4285f4"/><path d="M0.7 7.2 A6 6 0 0 1 10 5.5 L8.5 7 A4 4 0 0 0 2.4 8.2Z" fill="#ea4335"/><path d="M0.7 12.8 A6 6 0 0 1 0.7 7.2 L2.4 8.2 A4 4 0 0 0 2.4 11.8Z" fill="#fbbc05"/><path d="M10 14.5 A6 6 0 0 1 0.7 12.8 L2.4 11.8 A4 4 0 0 0 8.6 12.8Z" fill="#34a853"/></svg>
<svg width="14" height="12" style="left:581.2px;top:31px" viewBox="0 0 14 12"><path d="M1 4 Q7 1 13 4 L12 10 Q7 8 2 10Z" fill="#f0a030"/><path d="M4 2 L7 6 L10 2 L10 7 L4 7Z" fill="#1a6ac8"/></svg>
<svg width="12" height="20" style="left:600px;top:27px" viewBox="0 0 12 20"><rect width="12" height="20" rx="2" fill="#9a9ad0"/><rect x="0" y="0" width="12" height="3" fill="#e07a40"/><path d="M2 6 Q6 1 10 6 L10 14 Q6 16 2 14Z" fill="#2a2a2a"/><ellipse cx="6" cy="11" rx="3" ry="4" fill="#d9c4a0"/><rect x="1" y="15" width="10" height="4" fill="#fff"/><rect x="0" y="17" width="12" height="3" fill="#e07a40"/></svg>
<svg width="12" height="20" style="left:619.1px;top:27px" viewBox="0 0 12 20"><rect width="12" height="20" rx="2" fill="#9a9ad0"/><rect x="0" y="0" width="12" height="3" fill="#e07a40"/><path d="M2 6 Q6 1 10 6 L10 14 Q6 16 2 14Z" fill="#2a2a2a"/><ellipse cx="6" cy="11" rx="3" ry="4" fill="#d9c4a0"/><rect x="1" y="15" width="10" height="4" fill="#fff"/><rect x="0" y="17" width="12" height="3" fill="#e07a40"/></svg>
<svg width="12" height="20" style="left:638px;top:27px" viewBox="0 0 12 20"><rect width="12" height="20" rx="5" fill="#fff"/><path d="M10.5 9.5H6V11.5H8.6C8.3 13 7.2 14 6 14 A4 4 0 0 1 6 6 C7 6 7.8 6.4 8.5 7L10 5.5 C9 4.5 7.6 4 6 4 A6 6 0 1 0 12 10 Z" fill="#4285f4"/><path d="M0.7 7.2 A6 6 0 0 1 10 5.5 L8.5 7 A4 4 0 0 0 2.4 8.2Z" fill="#ea4335"/><path d="M0.7 12.8 A6 6 0 0 1 0.7 7.2 L2.4 8.2 A4 4 0 0 0 2.4 11.8Z" fill="#fbbc05"/><path d="M10 14.5 A6 6 0 0 1 0.7 12.8 L2.4 11.8 A4 4 0 0 0 8.6 12.8Z" fill="#34a853"/></svg>
<svg width="12" height="20" style="left:656.8px;top:27px" viewBox="0 0 12 20"><rect width="12" height="20" rx="2" fill="#9a9ad0"/><rect x="0" y="0" width="12" height="3" fill="#e07a40"/><path d="M2 6 Q6 1 10 6 L10 14 Q6 16 2 14Z" fill="#2a2a2a"/><ellipse cx="6" cy="11" rx="3" ry="4" fill="#d9c4a0"/><rect x="1" y="15" width="10" height="4" fill="#fff"/><rect x="0" y="17" width="12" height="3" fill="#e07a40"/></svg>
  <div class="a" style="left:683px;top:19px;width:35px;height:35px;border-radius:50%;background:#d9d9d9"></div>
  <svg width="16" height="16" style="left:692px;top:28.5px" viewBox="0 0 16 16"><path d="M8 1V15M1 8H15" stroke="#111" stroke-width="2.2"/></svg>
  <svg width="14" height="2" style="left:802px;top:18px"><rect width="14" height="1.3" fill="#111"/></svg>
  <svg width="14" height="14" style="left:858px;top:12px" viewBox="0 0 14 14"><rect x="0.6" y="0.6" width="12.8" height="12.8" fill="none" stroke="#111" stroke-width="1.2"/></svg>
  <svg width="14" height="14" style="left:915px;top:12px" viewBox="0 0 14 14"><path d="M0.5 0.5L13.5 13.5M13.5 0.5L0.5 13.5" stroke="#111" stroke-width="1.2"/></svg>
  <div class="a" style="left:0;top:57px;width:941px;height:1px;background:#b5b5b5"></div>
  <!-- toolbar -->
  <div class="a" style="left:0;top:57px;width:941px;height:88px;background:#eaeaea"></div>
  <div class="a" style="left:0;top:57px;width:333px;height:1px;background:#b9b9b9"></div>
  <div class="a" style="left:372px;top:57px;width:570px;height:1px;background:#b9b9b9"></div>
  <div class="a" style="left:334px;top:56px;width:37px;height:2px;background:#eaeaea"></div>

  <svg width="18" height="16" style="left:19px;top:72px" viewBox="0 0 18 16"><path d="M17 8H2M8.5 1.5L2 8L8.5 14.5" fill="none" stroke="#555" stroke-width="1.8"/></svg>
  <svg width="18" height="16" style="left:59px;top:72px" viewBox="0 0 18 16"><path d="M1 8H16M9.5 1.5L16 8L9.5 14.5" fill="none" stroke="#aaa" stroke-width="1.8"/></svg>
  <svg width="18" height="18" style="left:99px;top:71px" viewBox="0 0 18 18"><path d="M15 9.5A6.5 6.5 0 1 1 13 4.3" fill="none" stroke="#555" stroke-width="1.8"/><path d="M10 5.5L16.5 5.5L16.5 0Z" fill="#555"/></svg>
  <svg width="18" height="17" style="left:139px;top:72px" viewBox="0 0 18 17"><path d="M2 8.5L9 1.5L16 8.5M4 7V15.5H14V7" fill="none" stroke="#555" stroke-width="1.8"/></svg>
  <div class="a" style="left:175px;top:63px;width:362px;height:35px;border-radius:18px;background:#cbcbcb"></div>
  <svg width="12" height="14" style="left:192px;top:74px" viewBox="0 0 12 14"><path d="M3 6V4A3 3 0 0 1 9 4V6" fill="none" stroke="#555" stroke-width="1.8"/><rect x="0.5" y="6" width="11" height="8" rx="1" fill="#555"/></svg>
  <div class="a" style="left:217.5px;top:71.5px;font-size:17px;color:#2a2a2a;white-space:nowrap">vk.com/im?peers=442214661_c2...</div>
  <svg width="18" height="18" style="left:505px;top:71px" viewBox="0 0 18 18"><path d="M9 1.5L11.2 6.5L16.5 7L12.5 10.5L13.7 16L9 13.2L4.3 16L5.5 10.5L1.5 7L6.8 6.5Z" fill="none" stroke="#555" stroke-width="1.5" stroke-linejoin="round"/></svg>
  <!-- extensions -->
  <svg width="22" height="22" style="left:553px;top:70px" viewBox="0 0 22 22"><rect width="21" height="21" rx="3" fill="#3cbf9f"/><circle cx="10.5" cy="8.5" r="5.5" fill="none" stroke="#fff" stroke-width="1.6"/><circle cx="10.5" cy="8.5" r="2" fill="#fff"/><path d="M7.5 15.5H13.5M8.5 18H12.5" stroke="#fff" stroke-width="1.4"/></svg>
  <svg width="30" height="30" style="left:592px;top:69px" viewBox="0 0 30 30"><path d="M5 1H17V8H21L11 19L1 8H5Z" fill="#4cae2c"/><path d="M5 1H17V4H5Z" fill="#8ad44a"/><rect x="14" y="14" width="15" height="15" rx="2" fill="#3b82f0"/><text x="18" y="26" font-family="Liberation Sans" font-weight="bold" font-size="12" fill="#fff">?</text></svg>
  <svg width="30" height="30" style="left:632px;top:69px" viewBox="0 0 30 30"><path d="M7 1H15L21 7V15L15 21H7L1 15V7Z" fill="#e01a1a"/><g fill="#fff"><rect x="6.2" y="5" width="2" height="8" rx="1"/><rect x="8.6" y="3.2" width="2" height="9" rx="1"/><rect x="11" y="3.8" width="2" height="8.5" rx="1"/><rect x="13.4" y="5.5" width="1.8" height="7" rx="0.9"/><path d="M6.2 11 H15.2 V14 Q15.2 18 11 18 Q8 18 6.2 15Z"/><path d="M15 12 L17 9.5 Q18 9 18 10.2 L15.5 15Z"/></g><rect x="14" y="14" width="15" height="15" rx="2" fill="#555"/><text x="17.5" y="26.5" font-family="Liberation Sans" font-weight="bold" font-size="12" fill="#fff">9</text></svg>
  <svg width="20" height="22" style="left:674px;top:70px" viewBox="0 0 20 22"><path d="M3 5 L12 1 L17 3 V19 L12 21 L3 17 Z" fill="#a8a8a8"/><path d="M7 7 L12 5 V17 L7 15.5 Z" fill="#f2f2f2"/><path d="M12 1 L17 3 V19 L12 21Z" fill="#8c8c8c"/></svg>
  <svg width="22" height="22" style="left:713px;top:70px" viewBox="0 0 22 22"><path d="M11 1 L20 6 V16 L11 21 L2 16 V6 Z" fill="#dfe6ee"/><path d="M11 1 L20 6 V11 L16 13 L16 8.5 L11 6 Z" fill="#f07a2a"/><path d="M2 16 L11 21 L20 16 V11 L16 13 V14 L11 17 L6 14 Z" fill="#5a7894"/><g fill="#e8502a"><circle cx="11" cy="7.5" r="1.3"/><circle cx="14.5" cy="9.5" r="1.3"/><circle cx="14.5" cy="13" r="1.3"/><circle cx="11" cy="15" r="1.3"/><circle cx="7.5" cy="13" r="1.3"/><circle cx="7.5" cy="9.5" r="1.3"/><circle cx="11" cy="11" r="1.6"/></g></svg>
  <svg width="22" height="22" style="left:753px;top:70px" viewBox="0 0 22 22"><rect width="21" height="21" rx="2" fill="#9e9e9e"/><path d="M9 18V8A1.3 1.3 0 0 1 11.6 8V12L16 13V18Z" fill="#f2f2f2"/><circle cx="10.5" cy="7" r="4" fill="none" stroke="#d8d8d8" stroke-width="1"/></svg>
  <svg width="20" height="20" style="left:794px;top:71px" viewBox="0 0 20 20"><path d="M3 5H7A2.5 2.5 0 0 1 12 5H16V9A2.5 2.5 0 0 1 16 14V18H12A2.5 2.5 0 0 0 7 18H3V14A2.5 2.5 0 0 0 3 9Z" fill="#555"/></svg>
  <svg width="22" height="18" style="left:834px;top:72px" viewBox="0 0 22 18"><path d="M0 2H12M0 6.5H12M0 11H8" stroke="#555" stroke-width="2"/><path d="M16 14V1H21" fill="none" stroke="#555" stroke-width="1.8"/><circle cx="14" cy="14.5" r="3" fill="#555"/></svg>
  <div class="a" style="left:871px;top:68px;width:27px;height:27px;border-radius:50%;background:#e2e2e2;overflow:hidden"><svg width="27" height="27" style="left:0;top:0" viewBox="0 0 27 27"><path d="M9 24Q10 18 9 14A5 6 0 1 1 18 14Q16 18 17 24Z" fill="#fafafa"/></svg></div>
  <svg width="6" height="18" style="left:920px;top:72px" viewBox="0 0 6 18"><circle cx="3" cy="2.5" r="2" fill="#555"/><circle cx="3" cy="9" r="2" fill="#555"/><circle cx="3" cy="15.5" r="2" fill="#555"/></svg>
  <!-- bookmarks -->
  <svg width="17" height="17" style="left:20px;top:112px" viewBox="0 0 17 17"><g><rect x="0" y="0" width="3.5" height="3.5" fill="#ea4335"/><rect x="6.5" y="0" width="3.5" height="3.5" fill="#ea4335"/><rect x="13" y="0" width="3.5" height="3.5" fill="#ea4335"/><rect x="0" y="6.5" width="3.5" height="3.5" fill="#34a853"/><rect x="6.5" y="6.5" width="3.5" height="3.5" fill="#4285f4"/><rect x="13" y="6.5" width="3.5" height="3.5" fill="#fbbc05"/><rect x="0" y="13" width="3.5" height="3.5" fill="#34a853"/><rect x="6.5" y="13" width="3.5" height="3.5" fill="#fbbc05"/><rect x="13" y="13" width="3.5" height="3.5" fill="#fbbc05"/></g></svg>
  <div class="a bm" style="left:47.5px;font-size:14.3px">Сервисы</div>
  <svg width="20" height="20" style="left:129px;top:111px" viewBox="0 0 20 20"><rect width="20" height="20" fill="#3b5998"/><path d="M14 20V12.5H16.5L17 9.5H14V7.6C14 6.8 14.3 6.2 15.5 6.2H17V3.5C16.7 3.5 15.8 3.4 14.8 3.4C12.6 3.4 11 4.7 11 7.2V9.5H8.5V12.5H11V20Z" fill="#fff"/></svg>
  <div class="a bm" style="left:159px;font-size:14.3px">Facebook</div>
  <svg width="20" height="20" style="left:243px;top:111px" viewBox="0 0 20 20"><rect width="20" height="20" rx="3" fill="#1560f0"/><circle cx="10" cy="10" r="4" fill="none" stroke="#ffb400" stroke-width="2.2"/><path d="M14 10V11.5Q14 14 16 13.5 M14.8 13 A7 7 0 1 1 16.8 8" fill="none" stroke="#ffb400" stroke-width="2.2"/></svg>
  <div class="a bm" style="left:273px;font-size:14.1px">Mail.Ru</div>
  <svg width="20" height="20" style="left:343px;top:111px" viewBox="0 0 20 20"><rect width="20" height="20" rx="4" fill="#4c75a3"/><path d="M4 6.5H6.2C6.3 9.5 7.6 10.8 8.5 11V6.5H10.5V9C11.6 8.9 12.6 7.7 13 6.5H15C14.7 8 13.6 9.2 12.8 9.7C13.6 10.1 14.8 11.1 15.3 13H13.1C12.7 11.8 11.7 10.9 10.5 10.8V13H10.2C6.6 13 4.2 10.5 4 6.5Z" fill="#fff"/></svg>
  <div class="a bm" style="left:373px;font-size:13.4px">FanSerials</div>
  <svg width="20" height="20" style="left:463px;top:111px" viewBox="0 0 20 20"><rect width="20" height="20" rx="4" fill="#4c75a3"/><path d="M4 6.5H6.2C6.3 9.5 7.6 10.8 8.5 11V6.5H10.5V9C11.6 8.9 12.6 7.7 13 6.5H15C14.7 8 13.6 9.2 12.8 9.7C13.6 10.1 14.8 11.1 15.3 13H13.1C12.7 11.8 11.7 10.9 10.5 10.8V13H10.2C6.6 13 4.2 10.5 4 6.5Z" fill="#fff"/></svg>
  <div class="a bm" style="left:493px;font-size:14.7px">Новости</div>
  <svg width="20" height="20" style="left:571px;top:111px" viewBox="0 0 20 20"><rect width="20" height="20" rx="2" fill="#f7931e"/><circle cx="10" cy="6.5" r="3.2" fill="none" stroke="#fff" stroke-width="2"/><path d="M6 11.5Q10 14 14 11.5M10 13L6.5 17.5M10 13L13.5 17.5" fill="none" stroke="#fff" stroke-width="2"/></svg>
  <div class="a bm" style="left:601px;font-size:15px">Одноклассники</div>
  <div class="a bm" style="left:753px;top:108px;font-size:18px;color:#555">»</div>
  <div class="a" style="left:775px;top:111px;width:1px;height:21px;background:#c8c8c8"></div>
  <svg width="16" height="19" style="left:791px;top:112px" viewBox="0 0 16 19"><path d="M0.5 1.5Q0.5 0.5 1.5 0.5H12Q14.5 0.5 14.5 3V16Q14.5 18.5 12 18.5H1.5Q0.5 18.5 0.5 17.5Z" fill="#fde68a" stroke="#e8cf6a" stroke-width="1"/><rect x="12" y="14" width="3" height="4" fill="#f3d46a"/></svg>
  <div class="a bm" style="left:819px;font-size:14.75px">Другие закладки</div>

  <!-- VK page (dimmed) -->
  <div class="a" style="left:0;top:144px;width:932px;height:53px;background:#111722"></div>
  <svg width="40" height="24" style="left:19.5px;top:157.5px" viewBox="0 0 40 24"><path d="M1 1H8C8.3 9 11.5 12.5 14 13V1H20V8C23 7.8 25.8 4.5 27 1H33C32.2 5 29.2 8.2 27 9.5C29.2 10.5 32.5 13.3 34 19H27.5C26.5 15.8 23.5 13.2 20 13V19H19C9 19 2 12 1 1Z" fill="#3b3b3e" transform="translate(0,2) scale(1.12,1.07)"/></svg>
  <div class="a" style="left:225px;top:153px;width:288px;height:35px;border-radius:18px;background:#0b1019"></div>
  <svg width="20" height="20" style="left:235px;top:161px" viewBox="0 0 20 20"><circle cx="8" cy="8" r="6.3" fill="none" stroke="#3a3e46" stroke-width="2"/><path d="M12.5 12.5L18 18" stroke="#3a3e46" stroke-width="2.2"/></svg>
  <div class="a" style="left:260px;top:160px;font-size:17px;color:#3c4048">Поиск</div>
  <svg width="22" height="24" style="left:550px;top:158px" viewBox="0 0 22 24"><path d="M11 1Q18 1 18 9V15L21 18H1L4 15V9Q4 1 11 1Z M8 20Q11 23 14 20Z" fill="#070b12"/></svg>
  <svg width="22" height="24" style="left:607px;top:158px" viewBox="0 0 22 24"><path d="M8 5L20 1V17" fill="none" stroke="#070b12" stroke-width="3"/><ellipse cx="5" cy="19" rx="4.5" ry="3.5" fill="#070b12"/><ellipse cx="16.5" cy="16.5" rx="4.5" ry="3.5" fill="#070b12"/></svg>
  <div class="a" style="left:646px;top:158px;width:28px;height:25px;border-radius:3px;background:#161c26"></div>
  <svg width="12" height="14" style="left:656px;top:164px" viewBox="0 0 12 14"><path d="M1 1L11 7L1 13Z" fill="#2b313b"/></svg>
  <div class="a" style="left:0;top:197px;width:932px;height:742px;background:#323232"></div>
  <div class="a" style="left:225px;top:215px;width:688px;height:700px;background:#353535;border:1px solid #2a2a2a;border-radius:4px"></div>
  <div class="a" style="left:53px;top:223px;font-size:16px;color:#1d1f24">Моя страница</div>
  <svg width="20" height="14" style="left:19px;top:223px" viewBox="0 0 20 14"><path d="M10 1L19 8H16V14H4V8H1Z" fill="#202227"/></svg>
  <div class="a" style="left:516px;top:226px;font-size:16px;font-weight:bold;color:#1d1f24">План 2 курс &nbsp;×</div>
  <div class="a" style="left:859px;top:227px;width:32px;height:32px;border-radius:50%;background:#2a2220"></div>
  <div class="a" style="left:19px;top:901px;font-size:15px;color:#1f2126">Реклама&nbsp;&nbsp; Еще</div>
  <div class="a" style="left:249px;top:899px;width:22px;height:22px;border-radius:50%;border:2px solid #262626"></div>
  <div class="a" style="left:295px;top:879px;width:447px;height:50px;border:1px solid #2a2a2a;border-radius:6px"></div>
  <!-- video -->
  <div class="a" style="left:0;top:234px;width:150px;height:675px;background:#000"></div>
  <div class="a" style="left:150px;top:234px;width:782px;height:675px;background:#fefcfd;overflow:hidden">
    <div class="a" style="left:0;top:0;width:782px;height:128px;background:#f47a2c"></div>

    <svg width="130" height="73" style="left:87px;top:27px" viewBox="1215 262 130 73">
  <path d="M1222 270.8 C1230 275 1238 277 1245.5 276.6 C1255 276 1262 275 1266 276.2 C1275 278 1278 284 1278 290 L1278 330.4 C1272 322 1260 318 1245.5 318.9 C1235 319 1228 321 1222 323.3 Z" fill="#fff"/>
  <path d="M1279 268.4 C1290 274 1302 278 1313.2 278.2 C1322 278 1330 276 1335.5 274.9 L1335.5 318 C1335 325 1328 327 1323.3 327 C1318 327 1314 325 1309.8 324.3 C1300 322 1290 321 1284.7 321.6 C1281 323 1279 327 1279 330 Z" fill="#fff"/>
  <g stroke="#f47a2c" stroke-width="1.8" fill="none"><path d="M1263.4 292.1 V309.4 L1278.6 317.5 V300.6 V282.3 L1293.9 292.1 V309.4"/></g>
  <g fill="#f47a2c"><circle cx="1263.4" cy="292.1" r="6.4"/><circle cx="1263.4" cy="309.4" r="6.4"/><circle cx="1278.6" cy="300.6" r="6.4"/><circle cx="1278.6" cy="317.5" r="6.4"/><circle cx="1293.9" cy="292.1" r="6.4"/><circle cx="1293.9" cy="309.4" r="6.4"/><circle cx="1281" cy="282.3" r="5.5"/></g>
</svg>
    <div class="a" style="left:220.5px;top:44.5px;font-size:17.4px;line-height:17px;color:#fde9da;white-space:nowrap;transform:scale(0.779,1);transform-origin:0 0;letter-spacing:-0.3px">СИБИРСКИЙ ФЕДЕРАЛЬНЫЙ УНИВЕРСИТЕТ</div>
<div class="a" style="left:220.5px;top:67px;font-size:18.5px;line-height:18px;color:#fde9da;white-space:nowrap;transform:scale(0.749,1);transform-origin:0 0;letter-spacing:-0.3px">SIBERIAN FEDERAL UNIVERSITY</div>
    <div class="sl" style="left:35.3px;top:183.1px;font-size:26px;color:#151515;transform:scale(0.9955,0.8441)">Долгова Азалия Ивановна</div>
<div class="sl" style="left:35.3px;top:219.4px;font-size:16.4px;color:#151515;font-style:italic;transform:scale(0.9979,1.0037)">«Преступность, как и общество, живое, постоянно</div>
<div class="sl" style="left:35.3px;top:247.8px;font-size:16.4px;color:#151515;font-style:italic;transform:scale(0.9971,1.0037)">изменяющееся явление»</div>
<div class="sl" style="left:35.3px;top:274.8px;font-size:26px;color:#ea1a1e;transform:scale(1.0278,0.9655)">Содержание криминологии:</div>
<div class="sl" style="left:36.0px;top:315.4px;font-size:26px;color:#111;transform:scale(0.9514,0.8758)">1)</div>
<div class="sl" style="left:86.0px;top:315.4px;font-size:26px;color:#111;transform:scale(0.9952,0.8758)">Исследование и оценка преступности,</div>
<div class="sl" style="left:86.0px;top:340.4px;font-size:26px;color:#111;transform:scale(1.0300,0.8758)">ее изменений, их оценка;</div>
<div class="sl" style="left:36.0px;top:377.9px;font-size:26px;color:#111;transform:scale(0.9514,0.8758)">2)</div>
<div class="sl" style="left:86.0px;top:377.9px;font-size:26px;color:#111;transform:scale(0.9947,0.8758)">Исследование и оценка процессов</div>
<div class="sl" style="left:86.0px;top:402.9px;font-size:26px;color:#111;transform:scale(1.0174,0.8758)">детерминации с вычленением</div>
<div class="sl" style="left:86.0px;top:427.0px;font-size:26px;color:#111;transform:scale(1.0001,0.8758)">причинности</div>
<div class="sl" style="left:36.0px;top:465.4px;font-size:26px;color:#111;transform:scale(0.9514,0.8758)">3)</div>
<div class="sl" style="left:86.0px;top:465.4px;font-size:26px;color:#111;transform:scale(1.0378,0.8758)">Исследование и оценка эфекивности</div>
<div class="sl" style="left:86.0px;top:489.5px;font-size:26px;color:#111;transform:scale(1.0206,0.8758)">принимавшихся мер</div>
<div class="sl" style="left:36.0px;top:528.8px;font-size:26px;color:#111;transform:scale(0.9514,0.8758)">4)</div>
<div class="sl" style="left:86.0px;top:528.8px;font-size:26px;color:#111;transform:scale(1.0134,0.8758)">Разработка рекомендаций по борьбе с</div>
<div class="sl" style="left:86.0px;top:552.9px;font-size:26px;color:#111;transform:scale(0.9673,0.8758)">преступностью</div>
<div class="sl" style="left:36.0px;top:591.0px;font-size:26px;color:#111;transform:scale(0.9514,0.8758)">5)</div>
<div class="sl" style="left:86.0px;top:591.0px;font-size:26px;color:#111;transform:scale(1.0201,0.8758)">Разработка методологии и методики</div>
<div class="sl" style="left:86.0px;top:615.4px;font-size:26px;color:#111;transform:scale(1.0107,0.8758)">криминологических исследований</div>
    <svg width="147" height="342" style="left:635px;top:198.5px;filter:blur(0.7px)" viewBox="1763 433.5 147 342">
      <rect x="1763" y="433.5" width="147" height="342" fill="#34524a"/>
      <rect x="1784" y="433.5" width="56" height="72" fill="#2c5a52"/>
      <rect x="1840" y="433.5" width="50" height="45" fill="#7a2a3a"/>
      <path d="M1848 440H1884M1850 446H1882M1852 452H1880M1850 458H1882M1852 464H1878" stroke="#d8c8b0" stroke-width="1"/>
      <rect x="1890" y="433.5" width="20" height="85" fill="#8c9a70"/>
      <rect x="1838" y="478" width="52" height="60" fill="#2c5e40"/>
      <rect x="1787" y="505" width="51" height="57" fill="#7a2a3a"/>
      <path d="M1794 524H1832M1796 530H1830M1796 536H1830M1800 542H1826" stroke="#e6d8c8" stroke-width="1"/>
      <rect x="1784" y="562" width="58" height="60" fill="#9a9cd0"/>
      <rect x="1784" y="562" width="58" height="12" fill="#e4e4f2"/>
      <rect x="1784" y="580" width="58" height="8" fill="#f0f0f8"/>
      <rect x="1784" y="592" width="58" height="14" fill="#c8cce8"/>
      <path d="M1790 599H1836" stroke="#fff" stroke-width="2.5"/>
      <rect x="1800" y="606" width="30" height="16" fill="#7a6aa8"/>
      <rect x="1784" y="622" width="62" height="60" fill="#2c6846"/>
      <rect x="1791" y="628" width="50" height="50" fill="none" stroke="#b8c890" stroke-width="1"/>
      <path d="M1798 650H1834M1800 656H1832M1800 662H1830" stroke="#e8e8d0" stroke-width="0.8"/>
      <path d="M1784 682 L1846 650 L1862 700 L1866 775 H1784Z" fill="#2d2b2f"/>
      <rect x="1848" y="630" width="62" height="70" fill="#d6ae9c"/>
      <path d="M1840 605 Q1846 585 1842 565 Q1838 528 1860 505 Q1885 488 1910 497 V600 Q1895 560 1870 568 Q1852 580 1848 605 Z" fill="#e6e6ea"/>
      <path d="M1847 600 Q1846 560 1866 548 Q1892 538 1910 552 V690 Q1895 662 1868 658 Q1850 640 1847 600 Z" fill="#dcb8a6"/>
      <path d="M1850 560 Q1860 530 1890 524 Q1905 522 1910 526 V552 Q1890 540 1868 548 Q1855 555 1850 575Z" fill="#ececef"/>
      <ellipse cx="1870" cy="590" rx="5" ry="2.2" fill="#8a8a98"/>
      <ellipse cx="1903" cy="590" rx="5" ry="2.2" fill="#8a8a98"/>
      <path d="M1888 595 Q1893 612 1886 618" stroke="#c49888" stroke-width="1.5" fill="none"/>
      <path d="M1874 636 Q1886 640 1898 636" stroke="#b8707a" stroke-width="3.5" fill="none"/>
      <path d="M1846 650 Q1852 700 1866 775 H1910 V690 Q1890 668 1870 660 Z" fill="#f3eeee"/>
      <path d="M1862 680 Q1880 698 1906 694" stroke="#e6d4c0" stroke-width="3" stroke-dasharray="2.2 0.8" fill="none"/>
      <rect x="1763" y="433.5" width="21" height="342" fill="#dc2030"/>
      <rect x="1786" y="733" width="60" height="20" fill="#161616"/>
      <rect x="1789" y="736" width="46" height="6" fill="#f0f0f0"/>
      <rect x="1789" y="744" width="46" height="5" fill="#f0f0f0"/>
      <path d="M1786 752H1910" stroke="#8a8a8a" stroke-width="1.5"/>
    </svg>
    <div class="a" style="left:660px;top:216px;font-size:18px;font-weight:bold;line-height:18.5px;color:#fff;white-space:nowrap;transform:scale(0.82,0.95);transform-origin:0 0">РОССИЙСКИЙ<br>КРИМИНОЛОГИЧЕСКИЙ<br>ВЗГЛЯД</div>
    <div class="a" style="left:635px;top:0;width:147px;height:540px;overflow:hidden;pointer-events:none"></div>
  </div>
  <!-- right scrollbar -->
  <div class="a" style="left:932px;top:143px;width:10px;height:796px;background:#f1f1f1"></div>
  <div class="a" style="left:933px;top:165px;width:9px;height:666px;background:#c1c1c1"></div>
  <svg width="10" height="6" style="left:932px;top:149px"><path d="M2 5L6 1L10 5Z" fill="#a3a3a3"/></svg>
  <svg width="10" height="6" style="left:932px;top:924px"><path d="M2 1L6 5L10 1Z" fill="#505050"/></svg>
  <!-- horizontal scrollbar -->
  <div class="a" style="left:0;top:939px;width:942px;height:19px;background:#f1f1f1"></div>
  <div class="a" style="left:21px;top:941px;width:647px;height:15px;background:#c1c1c1"></div>
  <svg width="6" height="10" style="left:8px;top:943px"><path d="M5 0L0 5L5 10Z" fill="#a3a3a3"/></svg>
  <!-- participants panel -->
  <div class="a" style="left:856px;top:717px;width:65px;height:243px;background:#595959;border-radius:3px 3px 0 0"></div>
  <svg width="50" height="50" style="left:863px;top:724px" viewBox="0 0 50 50"><defs><clipPath id="c1"><circle cx="25" cy="25" r="25"/></clipPath></defs><g clip-path="url(#c1)"><rect width="50" height="50" fill="#060708"/><path d="M28 8 Q36 6 38 14 Q34 12 31 15 Q36 20 30 26 Q22 32 26 38 Q32 44 40 40 Q36 48 26 46 Q14 42 18 32 Q22 24 28 20 Q22 16 28 8Z" fill="#d8dce4" opacity="0.9"/><path d="M20 14 Q14 20 18 26 M34 30 Q44 34 40 42 M22 36 Q30 42 42 38" stroke="#9ec4e8" stroke-width="2" fill="none" opacity="0.8"/><path d="M30 10 Q24 12 26 18" stroke="#fff" stroke-width="1.5" fill="none"/></g></svg>
  <div class="a" style="left:863px;top:789px;width:50px;height:50px;border-radius:50%;background:#e1e7ee"></div>
  <svg width="24" height="20" style="left:876px;top:804px" viewBox="0 0 24 20"><path d="M2 4H7L9 1H15L17 4H22V19H2Z" fill="#a3b6c9"/><circle cx="12" cy="11" r="5" fill="#e1e7ee"/><circle cx="12" cy="11" r="3.2" fill="#a3b6c9"/></svg>
  <div class="a" style="left:903px;top:824px;width:9px;height:13px;border:2px solid #4bb34b;border-radius:2px;background:#595959"></div>
  <svg width="50" height="50" style="left:863px;top:854px" viewBox="0 0 50 50"><defs><clipPath id="c3"><circle cx="25" cy="25" r="25"/></clipPath></defs><g clip-path="url(#c3)"><rect width="50" height="50" fill="#6a3a22"/><path d="M0 0H50V50H0Z" fill="#7a4a2c"/><path d="M6 50 Q2 20 14 8 Q26 -2 38 8 Q48 18 46 50Z" fill="#c4a070"/><path d="M14 50 Q12 30 18 20 Q26 12 34 20 Q40 30 38 50Z" fill="#b88a68"/><ellipse cx="27" cy="28" rx="9" ry="12" fill="#e8c0a8"/><path d="M10 20 Q16 30 12 46 M40 18 Q34 32 40 46 M20 10 Q14 24 20 40" stroke="#e0c898" stroke-width="2.5" fill="none"/><path d="M0 42 Q20 50 50 40 V50 H0Z" fill="#2a1a14"/></g></svg>
  <div class="a" style="left:903px;top:889px;width:9px;height:13px;border:2px solid #4bb34b;border-radius:2px;background:#595959"></div>
  <div class="a" style="left:873px;top:926px;font-size:14px;font-weight:bold;color:#a9a9a9">13</div>
  <svg width="10" height="13" style="left:896px;top:927px" viewBox="0 0 10 13"><circle cx="5" cy="3.5" r="3" fill="#a9a9a9"/><path d="M0 13Q0 7 5 7Q10 7 10 13Z" fill="#a9a9a9"/></svg>
  <!-- download bar -->
  <div class="a" style="left:0;top:958px;width:942px;height:62px;background:#e6e6e6;border-top:1px solid #c6c6c6"></div>
  <svg width="22" height="22" style="left:24px;top:979px" viewBox="0 0 22 22"><path d="M6 0.5H16L20.5 5V21.5H6Z" fill="#fff" stroke="#9a9a9a" stroke-width="1"/><path d="M13 9H18M13 12H18M13 15H18" stroke="#2b7cd3" stroke-width="1.2"/><rect x="0" y="6" width="12" height="11" fill="#2b5fc8"/><text x="1" y="15" font-family="Liberation Sans" font-weight="bold" font-size="9" fill="#fff">W</text></svg>
  <div class="a" style="left:61px;top:982.5px;font-size:15.6px;color:#222;white-space:nowrap">grazhdanka_lekts....docx</div>
  <svg width="14" height="9" style="left:252px;top:986px" viewBox="0 0 14 9"><path d="M1 8L7 2L13 8" fill="none" stroke="#333" stroke-width="2"/></svg>
  <div class="a" style="left:287px;top:968px;width:1px;height:44px;background:#c8c8c8"></div>
  <div class="a" style="left:775px;top:970px;width:132px;height:39px;border-radius:4px;background:#d8d8d8"></div>
  <div class="a" style="left:794px;top:980px;font-size:15px;color:#222;white-space:nowrap">Показать все</div>
  <svg width="14" height="14" style="left:922px;top:982px" viewBox="0 0 14 14"><path d="M1 1L13 13M13 1L1 13" stroke="#333" stroke-width="2"/></svg>
</div>
<svg width="8" height="11" style="left:978px;top:692.5px" viewBox="0 0 8 11"><path d="M0 0 L7 6.5 H4.5 L6 10 L4.8 10.6 L3.2 7 L0 9 Z" fill="#fff"/></svg>
</body></html>
